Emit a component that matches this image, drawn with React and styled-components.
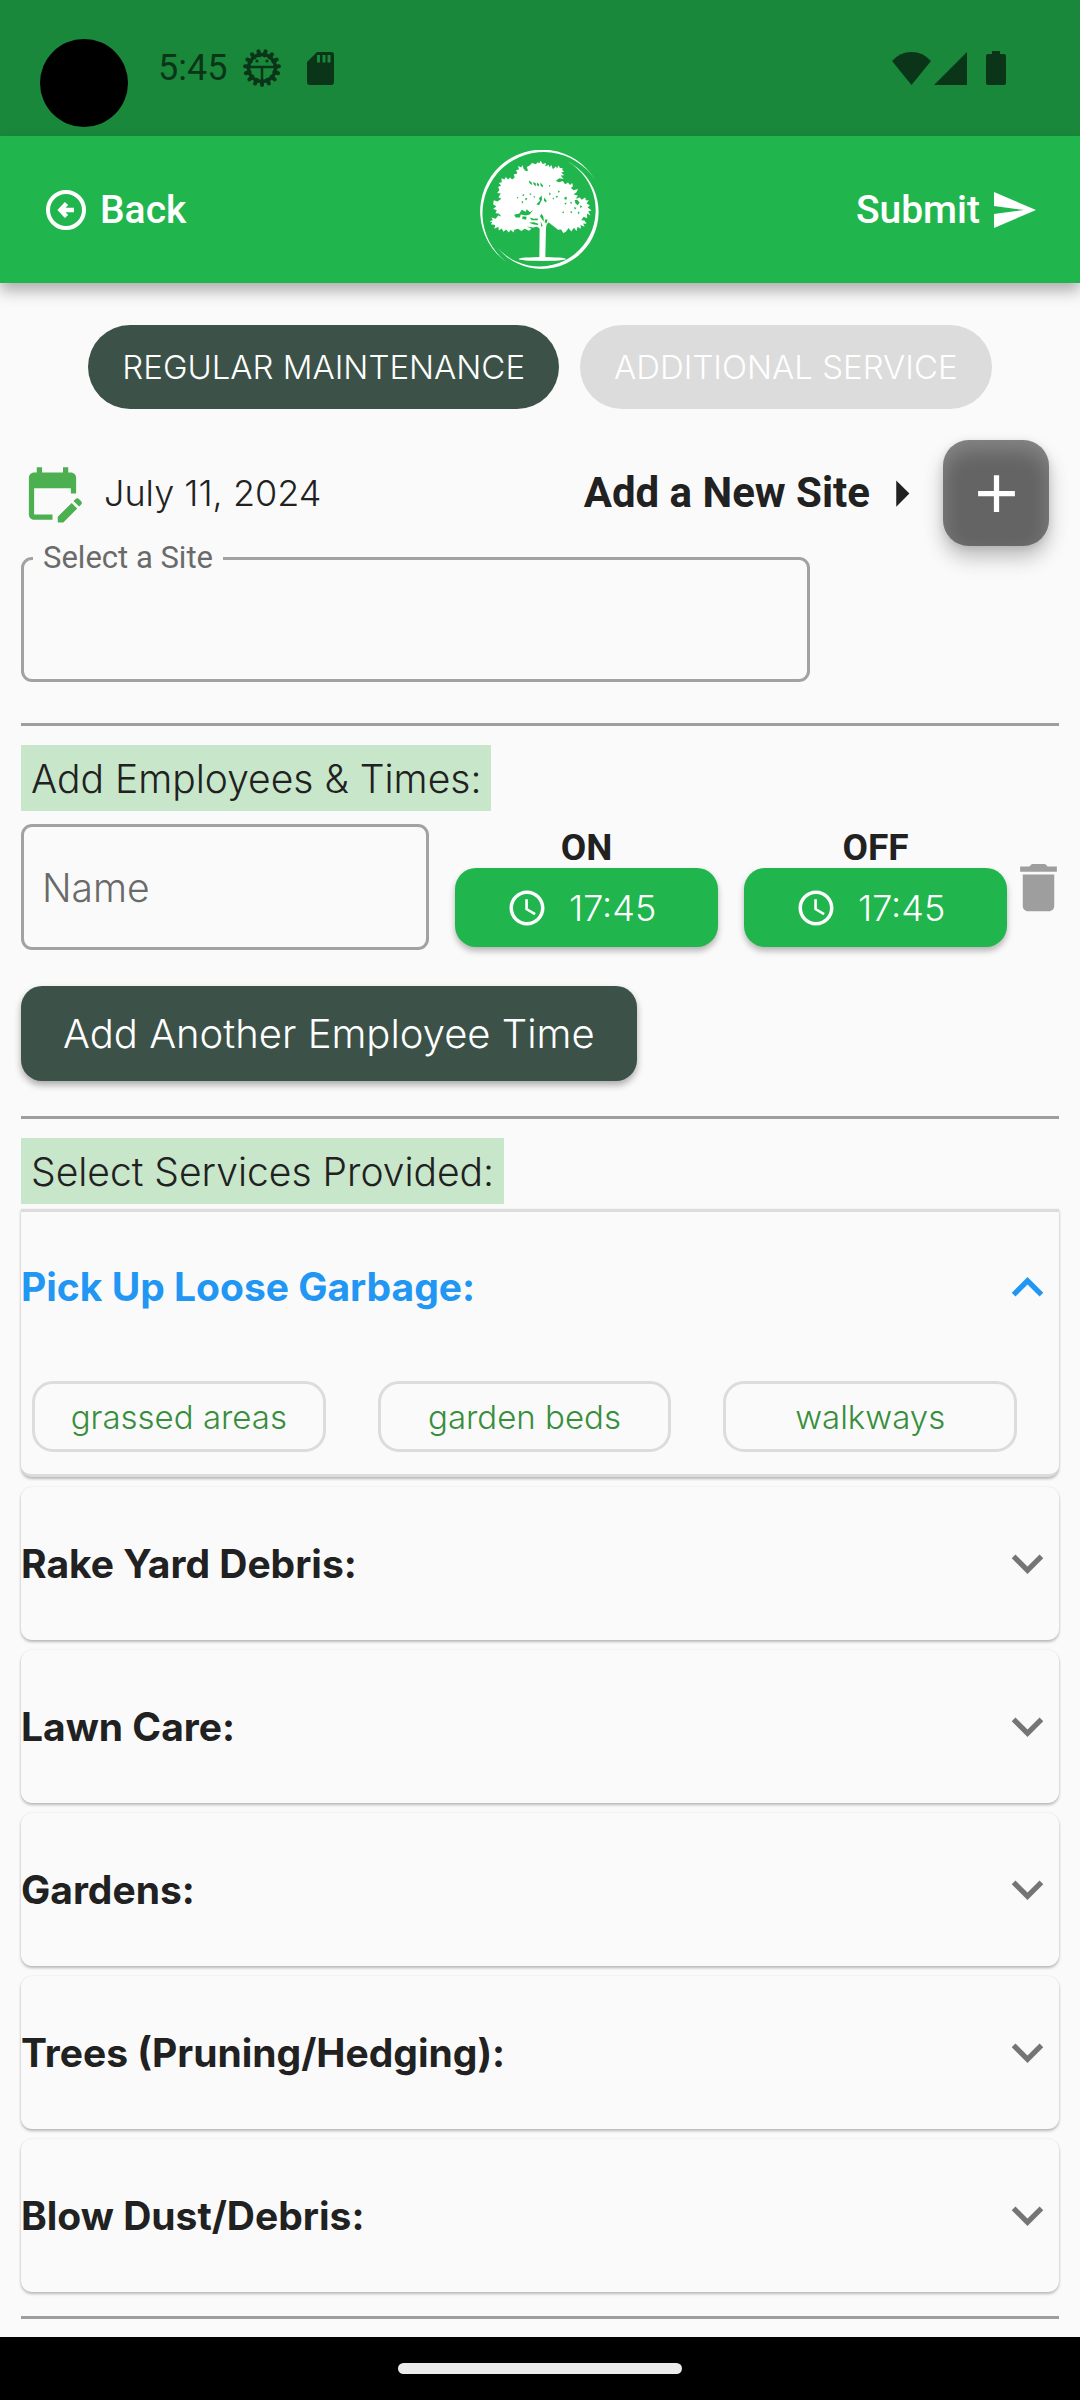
import React, { useState } from 'react';
import styled, { createGlobalStyle, css } from 'styled-components';
import {
  MdAdd,
  MdArrowRight,
  MdDelete,
  MdEditCalendar,
  MdExpandLess,
  MdExpandMore,
  MdSchedule,
  MdSend,
} from 'react-icons/md';

const color = {
  page: '#fafafa',
  ink: '#212121',
  muted: '#6a6a6a',
  line: '#9e9e9e',
  hairline: '#dcdcdc',
  status: '#1a883b',
  statusInk: '#0a3518',
  brand: '#21b64d',
  dark: '#3c5248',
  mint: '#c8e6c9',
  leaf: '#388e3c',
  calendar: '#4caf50',
  active: '#2196f3',
  white: '#ffffff',
};

const sans = "Inter, 'Open Sans', sans-serif";
const roboto = 'Roboto, sans-serif';

const GlobalStyle = createGlobalStyle`
  *, *::before, *::after { box-sizing: border-box; }
  body {
    margin: 0;
    background: ${color.page};
    color: ${color.ink};
    font-family: ${sans};
    font-weight: 300;
  }
  button, input, select { font: inherit; color: inherit; }
  svg { display: block; flex: none; }
`;

const plainButton = css`
  margin: 0;
  padding: 0;
  border: 0;
  background: none;
  cursor: pointer;
`;

const Screen = styled.div`
  display: flex;
  flex-direction: column;
  min-height: 100vh;
`;

/* Status bar */

const StatusBar = styled.div`
  position: relative;
  display: flex;
  align-items: center;
  justify-content: space-between;
  height: 136px;
  padding: 0 74px 0 158px;
  background: ${color.status};
  color: ${color.statusInk};
`;

const CameraHole = styled.span`
  position: absolute;
  top: 39px;
  left: 40px;
  width: 88px;
  height: 88px;
  border-radius: 50%;
  background: #000;
`;

const StatusGroup = styled.div`
  display: flex;
  align-items: center;
  gap: ${(p) => p.$gap}px;
`;

const Clock = styled.time`
  font: 400 36px/42px ${roboto};
`;

/* App bar */

const AppBar = styled.header`
  position: relative;
  display: grid;
  grid-template-columns: 1fr auto 1fr;
  align-items: center;
  height: 147px;
  padding: 0 42px;
  background: ${color.brand};
  box-shadow: 0 8px 14px rgba(0, 0, 0, 0.3);
`;

const BarButton = styled.button`
  ${plainButton}
  display: flex;
  align-items: center;
  gap: 10px;
  justify-self: ${(p) => p.$side};
  color: ${color.white};
  font: 500 39px/48px ${roboto};
`;

/* Page body */

const Main = styled.main`
  flex: 1;
  padding: 42px 21px 0;
`;

const Tabs = styled.div`
  display: flex;
  justify-content: center;
  gap: 21px;
`;

const Tab = styled.button`
  ${plainButton}
  height: 84px;
  padding: 0 34px;
  border-radius: 42px;
  background: ${(p) => (p.$active ? color.dark : color.hairline)};
  color: ${color.white};
  font-size: 33px;
  line-height: 42px;
`;

const DateRow = styled.div`
  display: flex;
  align-items: center;
  justify-content: space-between;
  margin-top: 31px;
  padding-right: 10px;
`;

const DateButton = styled.button`
  ${plainButton}
  display: flex;
  align-items: center;
  gap: 20px;
  font-size: 36px;
  line-height: 48px;

  svg { color: ${color.calendar}; }
`;

const NewSite = styled.div`
  display: flex;
  align-items: center;
  font: 700 42px/48px ${roboto};
`;

const AddSiteButton = styled.button`
  ${plainButton}
  display: grid;
  place-items: center;
  width: 106px;
  height: 106px;
  margin-left: 10px;
  border-radius: 26px;
  background: #646464;
  color: ${color.white};
  box-shadow:
    inset 0 10px 20px rgba(255, 255, 255, 0.22),
    0 12px 20px rgba(0, 0, 0, 0.24),
    0 2px 8px rgba(0, 0, 0, 0.1);
`;

const SiteField = styled.fieldset`
  width: 76%;
  height: 136px;
  min-width: 0;
  margin: 0;
  padding: 0 8px 0 9px;
  border: 3px solid #a2a2a2;
  border-radius: 11px;
`;

const SiteLegend = styled.legend`
  padding: 0 10px;
  color: ${color.muted};
  font: 400 31px/24px ${roboto};
`;

const SiteSelect = styled.select`
  display: block;
  width: 100%;
  height: 100%;
  border: 0;
  outline: 0;
  background: none;
  appearance: none;
  font-size: 39px;
`;

const Divider = styled.hr`
  height: 3px;
  margin: ${(p) => p.$top}px 0 ${(p) => p.$bottom}px;
  border: 0;
  background: ${color.line};
`;

const SectionTitle = styled.h2`
  width: fit-content;
  margin: 0;
  padding: 10px 10px 8px;
  background: ${color.mint};
  font-size: 39px;
  font-weight: 300;
  line-height: 48px;
`;

const EmployeeRow = styled.div`
  display: flex;
  align-items: center;
  margin: 13px -11px 36px 0;
`;

const EmployeeFields = styled.div`
  flex: 1;
  display: grid;
  grid-template-columns: 408fr 263fr 263fr;
  gap: 26px;
`;

const NameInput = styled.input`
  width: 100%;
  min-width: 0;
  height: 126px;
  padding: 0 18px;
  border: 3px solid #a2a2a2;
  border-radius: 11px;
  outline: 0;
  background: none;
  font-size: 39px;

  &::placeholder { color: ${color.muted}; opacity: 1; }
`;

const TimeColumn = styled.div`
  padding-top: 4px;
`;

const TimeLabel = styled.div`
  font: 700 37px/40px ${roboto};
  text-align: center;
`;

const TimeButton = styled.button`
  ${plainButton}
  display: flex;
  align-items: center;
  gap: 21px;
  width: 100%;
  height: 79px;
  padding: 0 51px;
  border-radius: 21px;
  background: ${color.brand};
  color: ${color.white};
  font-size: 36px;
  box-shadow: 0 4px 6px rgba(0, 0, 0, 0.28);
`;

const DeleteButton = styled.button`
  ${plainButton}
  color: ${color.line};
`;

const AddEmployeeButton = styled.button`
  ${plainButton}
  height: 95px;
  padding: 0 42px;
  border-radius: 21px;
  background: ${color.dark};
  color: ${color.white};
  font-size: 40px;
  line-height: 48px;
  box-shadow: 0 4px 7px rgba(0, 0, 0, 0.32);
`;

const PanelList = styled.div`
  display: flex;
  flex-direction: column;
  gap: 10px;
  margin-top: 5px;
`;

const Panel = styled.section`
  border-radius: 11px;
  background: ${color.page};
  box-shadow: 0 2px 3px rgba(0, 0, 0, 0.26), 0 0 2px rgba(0, 0, 0, 0.08);
  ${(p) =>
    p.$open &&
    css`
      border-top: 3px solid ${color.hairline};
      border-bottom: 3px solid ${color.hairline};
      border-radius: 0 0 11px 11px;
    `}
`;

const PanelHeading = styled.h3`
  margin: 0;
`;

const PanelToggle = styled.button`
  ${plainButton}
  display: flex;
  align-items: center;
  justify-content: space-between;
  width: 100%;
  height: ${(p) => (p.$open ? 150 : 153)}px;
  color: ${(p) => (p.$open ? color.active : color.ink)};
  font-size: 39px;
  font-weight: 700;
  line-height: 48px;
  text-align: left;

  svg { color: ${(p) => (p.$open ? color.active : '#757575')}; }
`;

const Options = styled.div`
  display: grid;
  grid-template-columns: repeat(3, 1fr);
  gap: 52px;
  padding: 19px 42px 22px 11px;
`;

const Option = styled.button`
  ${plainButton}
  height: 71px;
  border: 3px solid ${color.hairline};
  border-radius: 21px;
  color: ${color.leaf};
  font-size: 33px;
  line-height: 40px;
`;

const NavBar = styled.div`
  display: flex;
  align-items: center;
  justify-content: center;
  height: 63px;
  background: #000;
`;

const NavHandle = styled.span`
  width: 284px;
  height: 11px;
  border-radius: 6px;
  background: #ebebeb;
`;

/* Drawings */

const BugIcon = () => (
  <svg width="38" height="38" viewBox="-19 -19 38 38" fill="none" stroke="currentColor" aria-hidden="true">
    {Array.from({ length: 15 }, (_, i) => (
      <path key={i} d="M0 13V17" strokeWidth="4" strokeLinecap="round" transform={`rotate(${i * 24})`} />
    ))}
    <circle r="13.500" strokeWidth="3.500" />
    <path d="M-13 -1H13M0 -1V14" strokeWidth="2.500" />
    <circle cx="-5" cy="-7" r="1.600" fill="currentColor" stroke="none" />
    <circle cx="5" cy="-7" r="1.600" fill="currentColor" stroke="none" />
  </svg>
);

const SdCardIcon = () => (
  <svg width="27" height="33" viewBox="0 0 27 33" fill="currentColor" aria-hidden="true">
    <path
      fillRule="evenodd"
      d="M10 0H24Q27 0 27 3V30Q27 33 24 33H3Q0 33 0 30V10ZM10 3V10.500H13V3ZM15.500 3V10.500H18.500V3ZM20.500 3V10.500H23.500V3Z"
    />
  </svg>
);

const WifiIcon = () => (
  <svg width="39" height="33" viewBox="0 0 39 33" fill="currentColor" aria-hidden="true">
    <path d="M0 9Q8 0 19.500 0T39 9L19.500 33Z" />
  </svg>
);

const SignalIcon = () => (
  <svg width="33" height="33" viewBox="0 0 33 33" fill="currentColor" aria-hidden="true">
    <path d="M33 0V33H0Z" />
  </svg>
);

const BatteryIcon = () => (
  <svg width="20" height="34" viewBox="0 0 20 34" fill="currentColor" aria-hidden="true">
    <path d="M6 0H14V3H18Q20 3 20 5V32Q20 34 18 34H2Q0 34 0 32V5Q0 3 2 3H6Z" />
  </svg>
);

const BackIcon = () => (
  <svg width="48" height="48" viewBox="0 0 48 48" fill="none" stroke="currentColor" aria-hidden="true">
    <circle cx="24" cy="24" r="18" strokeWidth="4" />
    <path d="M24.500 17.500L18.500 24L24.500 30.500M19 24H32" strokeWidth="4.500" />
  </svg>
);

const TreeLogo = () => (
  <svg width="120" height="120" viewBox="56 53 360 361" fill="#fff" role="img" aria-label="Tree">
    <path d="M402 143A186 186 0 1 0 135 390A184.500 184.500 0 1 1 402 143Z" />
    <path d="M108 347A171 171 0 1 0 318 87A169.300 169.300 0 1 1 108 347Z" />
    <ellipse cx="243" cy="381" rx="71" ry="6" />
    <path
      d="M205 100L212 92L224 96L228 90L234 93L238 85L244 95L254 92L252 103L262 97L264 105L270 98L275 111L284 102
      L287 109L292 100L296 107L304 107L303 114L309 118L300 121L309 129L298 130L307 140L294 138L283 146L294 150
      L304 146L312 156L320 151L326 158L333 152L335 162L329 167L337 174L350 170L346 180L337 186L350 191L343 200
      L356 196L361 203L372 196L374 204L383 205L376 213L386 220L379 226L391 234L381 238L388 250L377 244L378 258
      L367 254L360 264L370 265L376 275L366 274L370 284L358 279L359 290L349 284L346 297L338 287L330 298L322 288
      L314 299L306 303L300 292L290 293L280 285L270 277L262 270L256 277L254 288L252 376H234L235 290L228 284L214 286
      L197 283L210 290L203 296L190 290L180 297L170 290L159 293L156 301L148 293L142 301L134 292L126 299L121 289
      L112 295L111 284L99 290L101 279L88 276L93 270L84 267L94 264L90 256L103 260L110 250L120 253L112 244L102 243
      L106 234L95 230L105 223L95 216L97 204L108 208L120 200L111 195L118 184L107 182L114 173L110 164L119 160
      L112 152L121 150L120 138L129 142L133 134L140 142L146 136L152 142L160 136L157 127L168 124L164 113L173 112
      L170 101L180 106L183 98L187 110L194 117L200 115L196 104Z"
    />
    <g fill={color.brand}>
      <path d="M202 145L210 149L213 158L205 154ZM215 149L223 153L224 162L217 157ZM228 151L233 156L232 163L226 158ZM237 150L244 158L246 165L238 161Z" />
      <path d="M233 198L241 190L242 203L233 219L225 216L236 206ZM248 196L256 206L254 211L248 206Z" />
      <path d="M182 188L189 185L187 192ZM190 200L198 197L195 205ZM166 196L171 194L169 200ZM205 183L211 185L206 189ZM216 194L220 190L220 198ZM180 210L185 206L185 214Z" />
      <path d="M264 180L269 185L264 190ZM262 160L267 158L266 164ZM283 192L290 191L287 198ZM273 198L278 196L277 203ZM289 175L296 177L292 182ZM309 196L317 194L316 202L310 202Z" />
      <path d="M309 213L316 211L314 218ZM326 211L332 209L330 216ZM340 204L348 203L355 211L350 219L343 214ZM356 219L363 223L358 228ZM338 225L346 227L341 233ZM326 239L333 237L331 244ZM302 240L308 237L307 244ZM350 238L356 242L350 246Z" />
      <path d="M158 248L174 244L181 233L193 239L196 231L206 240L216 233L205 247L193 250L178 247L176 256L163 256ZM184 252L196 254L194 263L182 260ZM205 256L217 260L230 259L229 264L211 264ZM203 271L218 270L231 275L230 279L214 276ZM240 245L246 253L248 268L243 263L236 252ZM238 268L244 280L240 285ZM252 261L259 263L255 274L250 270Z" />
    </g>
  </svg>
);

const panels = [
  { title: 'Pick Up Loose Garbage:', options: ['grassed areas', 'garden beds', 'walkways'] },
  { title: 'Rake Yard Debris:', options: [] },
  { title: 'Lawn Care:', options: [] },
  { title: 'Gardens:', options: [] },
  { title: 'Trees (Pruning/Hedging):', options: [] },
  { title: 'Blow Dust/Debris:', options: [] },
];

const tabs = ['REGULAR MAINTENANCE', 'ADDITIONAL SERVICE'];

function TimePicker({ label, value }) {
  return (
    <TimeColumn>
      <TimeLabel>{label}</TimeLabel>
      <TimeButton type="button" aria-label={`${label} ${value}`}>
        <MdSchedule size={42} />
        {value}
      </TimeButton>
    </TimeColumn>
  );
}

export default function App() {
  const [tab, setTab] = useState(0);
  const [openPanel, setOpenPanel] = useState(0);

  return (
    <Screen>
      <GlobalStyle />
      <StatusBar>
        <CameraHole />
        <StatusGroup $gap={26}>
          <StatusGroup $gap={16}>
            <Clock>5:45</Clock>
            <BugIcon />
          </StatusGroup>
          <SdCardIcon />
        </StatusGroup>
        <StatusGroup $gap={19}>
          <StatusGroup $gap={3}>
            <WifiIcon />
            <SignalIcon />
          </StatusGroup>
          <BatteryIcon />
        </StatusGroup>
      </StatusBar>

      <AppBar>
        <BarButton type="button" $side="start">
          <BackIcon />
          Back
        </BarButton>
        <TreeLogo />
        <BarButton type="button" $side="end">
          Submit
          <MdSend size={48} />
        </BarButton>
      </AppBar>

      <Main>
        <Tabs>
          {tabs.map((name, i) => (
            <Tab key={name} type="button" $active={i === tab} aria-pressed={i === tab} onClick={() => setTab(i)}>
              {name}
            </Tab>
          ))}
        </Tabs>

        <DateRow>
          <DateButton type="button">
            <MdEditCalendar size={63} />
            July 11, 2024
          </DateButton>
          <NewSite>
            Add a New Site
            <MdArrowRight size={63} />
            <AddSiteButton type="button" aria-label="Add a New Site">
              <MdAdd size={63} />
            </AddSiteButton>
          </NewSite>
        </DateRow>

        <SiteField>
          <SiteLegend>
            <label htmlFor="site">Select a Site</label>
          </SiteLegend>
          <SiteSelect id="site" defaultValue="">
            <option value="" />
          </SiteSelect>
        </SiteField>

        <Divider $top={41} $bottom={19} />

        <SectionTitle>Add Employees &amp; Times:</SectionTitle>
        <EmployeeRow>
          <EmployeeFields>
            <NameInput type="text" placeholder="Name" aria-label="Name" />
            <TimePicker label="ON" value="17:45" />
            <TimePicker label="OFF" value="17:45" />
          </EmployeeFields>
          <DeleteButton type="button" aria-label="Remove employee">
            <MdDelete size={63} />
          </DeleteButton>
        </EmployeeRow>
        <AddEmployeeButton type="button">Add Another Employee Time</AddEmployeeButton>

        <Divider $top={35} $bottom={19} />

        <SectionTitle>Select Services Provided:</SectionTitle>
        <PanelList>
          {panels.map(({ title, options }, i) => {
            const open = i === openPanel;
            return (
              <Panel key={title} $open={open}>
                <PanelHeading>
                  <PanelToggle
                    type="button"
                    $open={open}
                    aria-expanded={open}
                    onClick={() => setOpenPanel(open ? -1 : i)}
                  >
                    {title}
                    {open ? <MdExpandLess size={63} /> : <MdExpandMore size={63} />}
                  </PanelToggle>
                </PanelHeading>
                {open && options.length > 0 && (
                  <Options>
                    {options.map((name) => (
                      <Option key={name} type="button">
                        {name}
                      </Option>
                    ))}
                  </Options>
                )}
              </Panel>
            );
          })}
        </PanelList>

        <Divider $top={24} $bottom={18} />
      </Main>

      <NavBar>
        <NavHandle />
      </NavBar>
    </Screen>
  );
}
